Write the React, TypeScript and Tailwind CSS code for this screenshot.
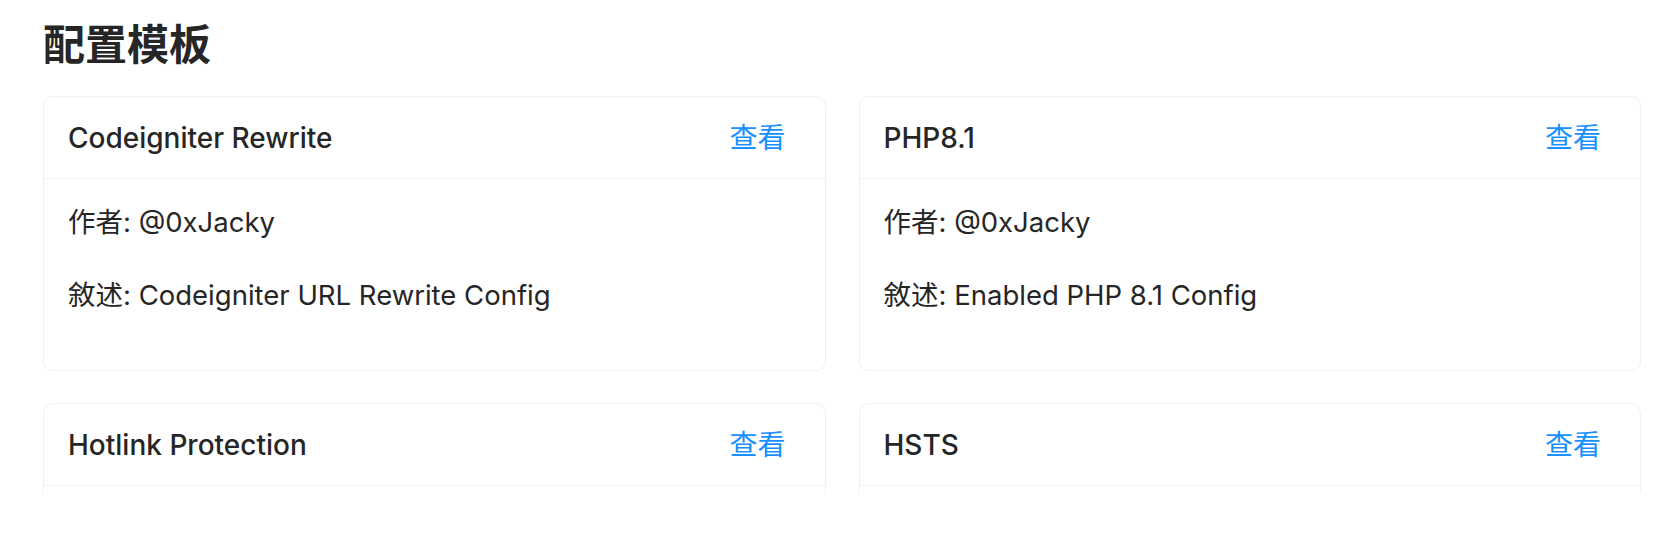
import React from "react";

const templates = [
  { name: "Codeigniter Rewrite", author: "@0xJacky", desc: "Codeigniter URL Rewrite Config" },
  { name: "PHP8.1", author: "@0xJacky", desc: "Enabled PHP 8.1 Config" },
  { name: "Hotlink Protection", author: "", desc: "" },
  { name: "HSTS", author: "", desc: "" },
];

function TemplateCard({ name, author, desc }: { name: string; author: string; desc: string }) {
  return (
    <div className="rounded-[10px] border border-[#f0f0f0] bg-white">
      {/* Header */}
      <div className="flex h-[82px] items-center justify-between border-b border-[#f0f0f0] pl-[24px] pr-[39px]">
        <div className="text-[28px] font-medium text-[#262626]">{name}</div>
        <button className="text-[28px] text-[#1890ff]">查看</button>
      </div>
      {/* Body */}
      <div className="h-[191px] px-[24px] pt-[24px] text-[27.5px] leading-[38px] text-[#262626]">
        {author && <p className="mb-[35px]">作者: {author}</p>}
        {desc && <p>敘述: {desc}</p>}
      </div>
    </div>
  );
}

export default function App() {
  return (
    <div
      className="h-[544px] bg-white"
      style={{ fontFamily: 'Inter, "Noto Sans CJK SC", sans-serif' }}
    >
      <div className="h-[494px] overflow-hidden pl-[43px] pr-[29px]">
        <h2 className="pt-[19px] pb-[25px] text-[42px] font-semibold leading-[52px] text-[#262626]">
          配置模板
        </h2>
        <div className="grid grid-cols-2 gap-x-[33px] gap-y-[32px]">
          {templates.map((t, i) => (
            <TemplateCard key={i} {...t} />
          ))}
        </div>
      </div>
    </div>
  );
}
